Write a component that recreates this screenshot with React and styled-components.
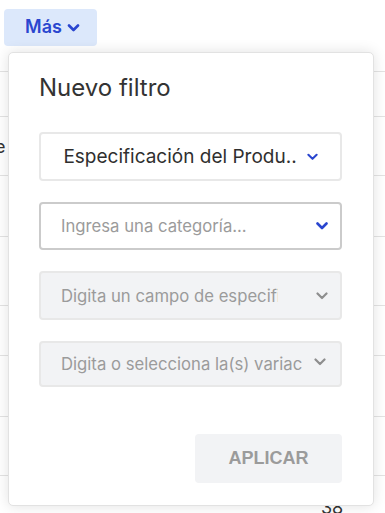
import React from "react";
import styled, { createGlobalStyle } from "styled-components";

const Global = createGlobalStyle`
  html, body { margin: 0; padding: 0; background: #fff; }
  body { font-family: "Inter", "Noto Sans", sans-serif; }
  * { box-sizing: border-box; }
`;

const Page = styled.div`
  position: relative;
  width: 385px;
  height: 513px;
  overflow: hidden;
  background: #fff;
`;

const TopBar = styled.div`
  height: 72px;
  padding: 9px 0 0 4px;
  border-bottom: 1px solid #e3e3e3;
`;

const MoreButton = styled.button`
  display: flex;
  align-items: center;
  justify-content: center;
  gap: 5px;
  width: 93px;
  height: 37px;
  border: none;
  border-radius: 4px;
  background: #dce8fb;
  color: #2a46cf;
  font-family: "Inter", sans-serif;
  font-weight: 600;
  font-size: 18px;
  padding: 0 0 2px 4px;
`;

const Row = styled.div`
  height: ${(p) => p.$h}px;
  border-bottom: 1px solid #e3e3e3;
  position: relative;
  font-size: 18px;
  color: #333;
`;

const CellText = styled.span`
  position: absolute;
  left: ${(p) => p.$x}px;
  top: ${(p) => p.$y}px;
  font-family: "Inter", sans-serif;
`;

const Popup = styled.div`
  position: absolute;
  left: 8px;
  top: 52px;
  width: 366px;
  height: 454px;
  background: #fff;
  border: 1px solid #e2e2e2;
  border-radius: 5px;
  box-shadow: 0 0 14px rgba(0, 0, 0, 0.12);
  padding: 19px 31px 0 30px;
  display: flex;
  flex-direction: column;
`;

const Title = styled.h2`
  margin: 0;
  font-family: "Inter", sans-serif;
  font-weight: 400;
  font-size: 24px;
  color: #333;
  line-height: 32px;
`;

const Fields = styled.div`
  display: flex;
  flex-direction: column;
  gap: 21px;
  margin-top: 28px;
`;

const Field = styled.div`
  display: flex;
  align-items: center;
  justify-content: ${(p) => (p.$center ? "center" : "flex-start")};
  height: ${(p) => p.$h || 49}px;
  border: ${(p) => (p.$focus ? "2px solid #cbcbcb" : "2px solid #e8e8e8")};
  border-radius: 4px;
  background: ${(p) => (p.$disabled ? "#f2f3f5" : "#fff")};
  padding: 0 ${(p) => p.$pr || 12}px 0 ${(p) => p.$pl || 20}px;
  gap: 10px;
`;

const FieldText = styled.span`
  flex: ${(p) => (p.$value ? "0 0 auto" : 1)};
  min-width: 0;
  white-space: nowrap;
  overflow: hidden;
  font-family: "Inter", sans-serif;
  font-size: ${(p) => (p.$value ? 19 : 16.7)}px;
  color: ${(p) => (p.$value ? "#2f2f2f" : "#9b9b9b")};
  margin-right: ${(p) => p.$mr || 0}px;
`;

const Chevron = ({ color, dy = 0, w = 12, sw = 2.2 }) => (
  <svg width={w} height="8" viewBox="0 0 12 8" style={{ flexShrink: 0, marginTop: dy }}>
    <path d="M1.5 1.5 L6 6 L10.5 1.5" fill="none" stroke={color} strokeWidth={sw} strokeLinecap="round" strokeLinejoin="round" />
  </svg>
);

const Footer = styled.div`
  display: flex;
  justify-content: flex-end;
  margin-top: 47px;
`;

const ApplyButton = styled.button`
  width: 147px;
  height: 49px;
  border: none;
  border-radius: 4px;
  background: #f2f3f5;
  color: #9b9b9b;
  font-family: "Liberation Sans", Arial, sans-serif;
  font-weight: 700;
  font-size: 18px;
  padding: 0;
`;

export default function App() {
  const rows = [45, 59, 61, 69, 50, 61, 59, 40];
  return (
    <Page>
      <Global />
      <TopBar>
        <MoreButton>
          Más
          <Chevron color="#2a46cf" dy={2} w={13} sw={2.6} />
        </MoreButton>
      </TopBar>
      {rows.map((h, i) => (
        <Row key={i} $h={h}>
          {i === 1 && <CellText $x={-5} $y={19}>e</CellText>}
          {i === 7 && <CellText $x={321} $y={21}>38</CellText>}
        </Row>
      ))}
      <Popup>
        <Title>Nuevo filtro</Title>
        <Fields>
          <Field $center $pl={10} $pr={10}>
            <FieldText $value>Especificación del Produ..</FieldText>
            <Chevron color="#2a46cf" w={11} />
          </Field>
          <Field $focus $h={48}>
            <FieldText>Ingresa una categoría...</FieldText>
            <Chevron color="#2a46cf" w={12} sw={2.6} />
          </Field>
          <Field $disabled>
            <FieldText $mr={28}>Digita un campo de especificación</FieldText>
            <Chevron color="#8e8e8e" w={12} />
          </Field>
          <Field $disabled $h={46} $pr={14}>
            <FieldText $mr={2}>Digita o selecciona la(s) variaciones</FieldText>
            <Chevron color="#8e8e8e" dy={-5} w={12} />
          </Field>
        </Fields>
        <Footer>
          <ApplyButton>APLICAR</ApplyButton>
        </Footer>
      </Popup>
    </Page>
  );
}
